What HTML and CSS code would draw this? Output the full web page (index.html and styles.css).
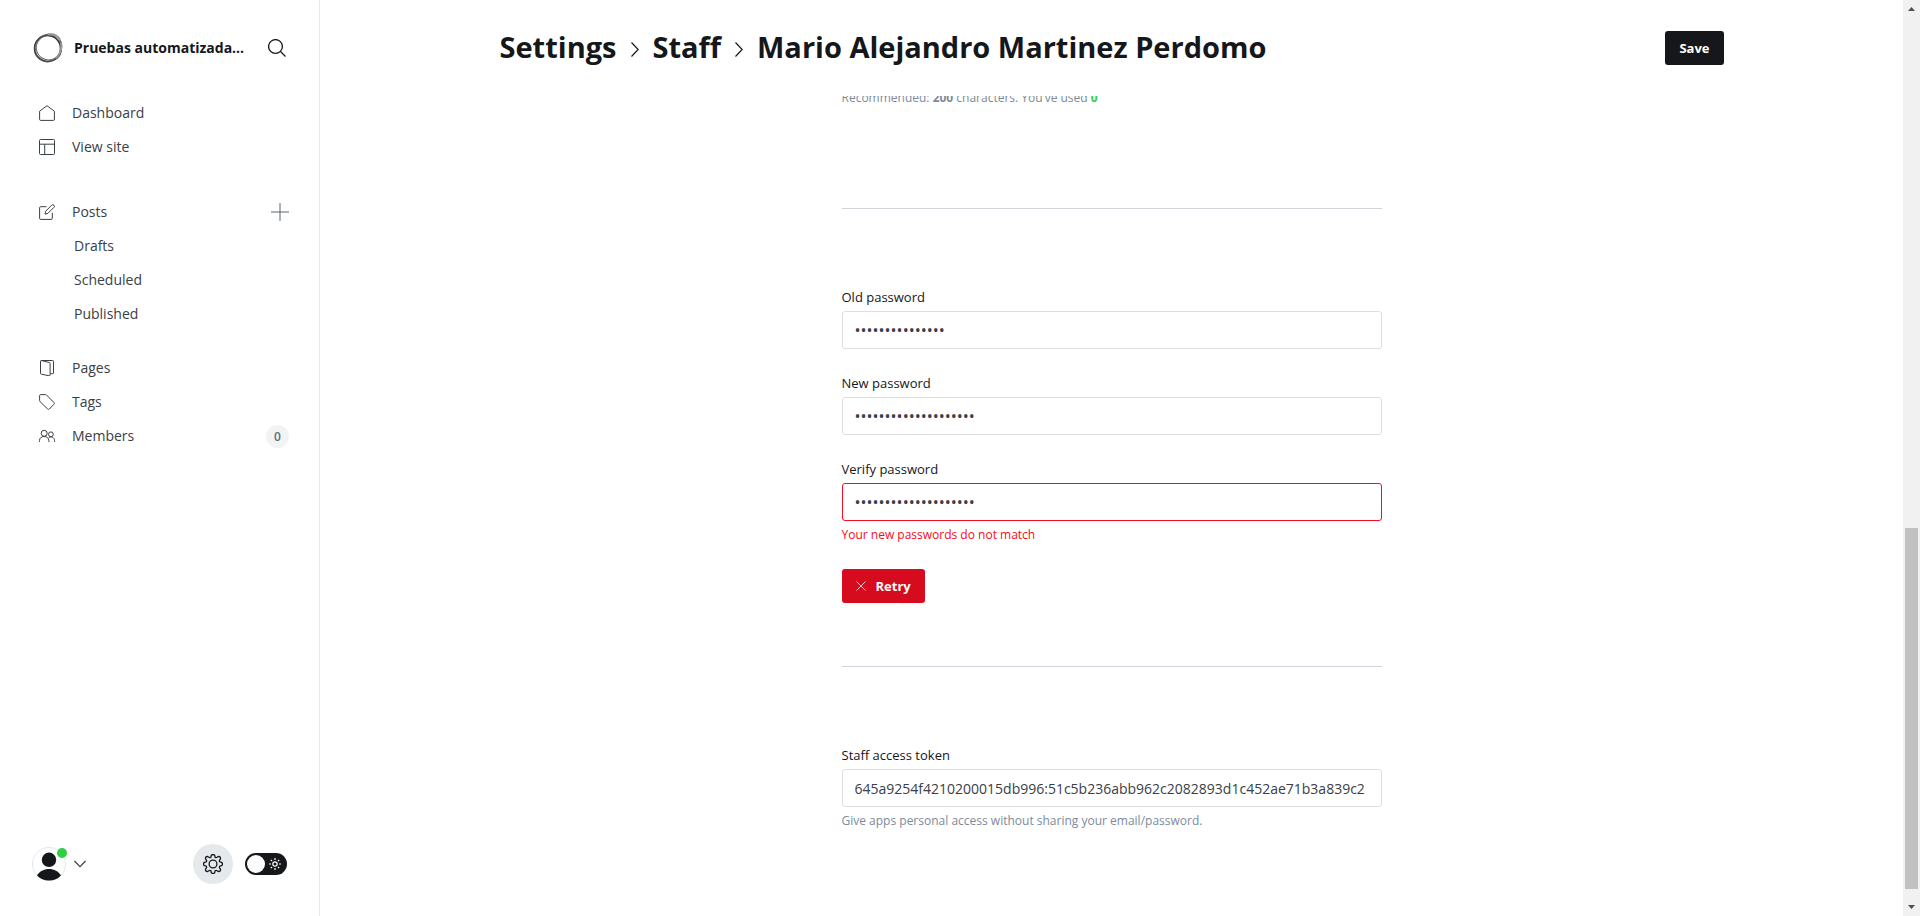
FILE: index.html
```html
<!DOCTYPE html>
<html lang="en">
<head>
<meta charset="utf-8">
<title>Settings - Staff - Mario Alejandro Martinez Perdomo</title>
<link rel="stylesheet" href="styles.css">
</head>
<body>
<div class="app">
  <aside class="sidebar">
    <header class="site">
      <svg class="site-logo" viewBox="0 0 30 30" fill="none">
        <ellipse cx="14.500" cy="15.500" rx="13" ry="13.200" stroke="#333" stroke-width="1.500"/>
        <ellipse cx="16" cy="14" rx="12.600" ry="13" transform="rotate(30 16 14)" stroke="#666" stroke-width="1"/>
        <ellipse cx="15.500" cy="15" rx="14" ry="12.400" transform="rotate(-50 15.500 15)" stroke="#777" stroke-width="1.200"/>
        <ellipse cx="15" cy="15.500" rx="13.600" ry="12.600" transform="rotate(15 15 15.500)" stroke="#444" stroke-width="1"/>
        <path d="M15 1.500c5-1 9 0 12 5M28 10c1 5-1 11-5 15" stroke="#999" stroke-width="2"/>
      </svg>
      <span class="site-name">Pruebas automatizada...</span>
      <button class="icon-button" type="button" aria-label="Search">
        <svg class="icon-18" viewBox="0 0 18 18" fill="none" stroke="#15171a" stroke-width="1.300"><circle cx="7.500" cy="7.500" r="6.900"/><path d="M12.500 12.500l5 5"/></svg>
      </button>
    </header>
    <nav class="nav">
      <ul class="nav-group">
        <li class="nav-row"><a href="#"><svg class="icon-16" viewBox="0 0 16 16"><path d="M.6 6.200L8 .7l7.400 5.500v8.100a1.100 1.100 0 0 1-1.100 1.100H1.700a1.100 1.100 0 0 1-1.100-1.100z"/></svg>Dashboard</a></li>
        <li class="nav-row"><a href="#"><svg class="icon-16" viewBox="0 0 16 16"><rect x=".5" y=".5" width="15" height="15" rx="1"/><path d="M.5 5.200h15M5.700 5.200v10.300"/></svg>View site</a></li>
      </ul>
      <ul class="nav-group posts">
        <li class="nav-row"><a href="#"><svg class="icon-16" viewBox="0 0 16 16"><path d="M7.500 2.700H1.700A1.100 1.100 0 0 0 .6 3.800v10.500a1.100 1.100 0 0 0 1.100 1.100h10.500a1.100 1.100 0 0 0 1.100-1.100V8.700M6 10.100l.7-2.900 6-6a1.500 1.500 0 0 1 2.200 2.200l-6 6z"/></svg>Posts</a>
          <button class="icon-button" type="button" aria-label="New post"><svg class="icon-18" viewBox="0 0 18 18" fill="none" stroke="#596570"><path d="M9 0v18M0 9h18"/></svg></button></li>
        <li class="nav-row sub"><a href="#">Drafts</a></li>
        <li class="nav-row sub"><a href="#">Scheduled</a></li>
        <li class="nav-row sub"><a href="#">Published</a></li>
      </ul>
      <ul class="nav-group">
        <li class="nav-row"><a href="#"><svg class="icon-16" viewBox="0 0 16 16"><path d="M1.500 1.100v12.200a.8.8 0 0 0 .6.8l8 1.700c.6.1 1-.2 1-.8V3.400c0-.5-.3-.8-.7-.9L2.500.6c-.6-.1-1 .1-1 .5zM2.200.500h11.500a.8.8 0 0 1 .8.8v11.600a.8.8 0 0 1-.8.8h-2.500"/></svg>Pages</a></li>
        <li class="nav-row"><a href="#"><svg class="icon-16" viewBox="0 0 16 16"><path d="M.6 1.700A1.100 1.100 0 0 1 1.700.600h4.800c.4 0 .8.200 1.100.500l7.300 7.400c.6.600.6 1.200 0 1.800l-4.500 4.700c-.5.500-1.200.5-1.700 0L1.200 7.800c-.4-.4-.6-.8-.6-1.300z"/></svg>Tags</a></li>
        <li class="nav-row"><a href="#"><svg class="icon-16" viewBox="0 0 16 16"><circle cx="5.200" cy="5.300" r="3"/><path d="M.4 14V12.600a4.800 4.800 0 0 1 9.500 0V14M9.700 9.700c2.800-1.800 5.900 0 5.900 2.900V14"/><circle cx="11.900" cy="6.300" r="2.400"/></svg>Members</a><span class="count">0</span></li>
      </ul>
    </nav>
    <footer class="account">
      <button class="profile" type="button" aria-label="Account menu">
        <span class="avatar">
          <svg class="avatar-image" viewBox="0 0 34 34"><circle cx="17" cy="17" r="16.500" fill="#fff" stroke="#e3e6e9"/><circle cx="17" cy="12.800" r="7.200" fill="#15171a"/><path d="M5 28.400c2.500-4 7-6.400 12-6.400s9.500 2.400 12 6.400A16.500 16.500 0 0 1 17 33.400a16.500 16.500 0 0 1-12-5z" fill="#15171a"/></svg>
          <span class="status"></span>
        </span>
        <svg class="chevron" viewBox="0 0 12 8" fill="none" stroke="#394047" stroke-width="1.200"><path d="M.5 1L6 6.700 11.500 1"/></svg>
      </button>
      <a class="gear" href="#" aria-label="Settings">
        <svg class="icon-20" viewBox="0 0 20 20" fill="none" stroke="#15171a" stroke-width="1.300" stroke-linejoin="round"><circle cx="10" cy="10" r="3.900"/><path d="M8.300 1.300Q10 -.2 11.700 1.300L12.100 3.200Q12.800 3.900 13.600 3.500L15.300 2.500Q17.700 2.300 17.500 4.700L16.500 6.400Q16.100 7.200 16.800 7.900L18.700 8.300Q20.200 10 18.700 11.700L16.800 12.100Q16.100 12.800 16.500 13.600L17.500 15.300Q17.700 17.700 15.300 17.500L13.600 16.500Q12.800 16.100 12.100 16.800L11.700 18.700Q10 20.200 8.300 18.700L7.900 16.800Q7.200 16.100 6.400 16.500L4.700 17.500Q2.300 17.700 2.500 15.300L3.500 13.600Q3.900 12.800 3.200 12.100L1.300 11.700Q-.2 10 1.300 8.300L3.200 7.900Q3.900 7.200 3.500 6.400L2.500 4.700Q2.300 2.300 4.700 2.500L6.400 3.500Q7.200 3.900 7.900 3.200Z"/></svg>
      </a>
      <button class="theme-switch" type="button" role="switch" aria-checked="false" aria-label="Dark mode">
        <span class="knob"></span>
        <svg class="sun" viewBox="0 0 12 12" fill="none" stroke="#fff" stroke-width="1.200"><circle cx="6" cy="6" r="2.200"/><path d="M6 0v2M6 10v2M0 6h2M10 6h2M1.800 1.800l1.200 1.200M9 9l1.200 1.200M10.200 1.800L9 3M3 9l-1.200 1.200"/></svg>
      </button>
    </footer>
  </aside>
  <main class="main">
    <header class="topbar">
      <h1 class="title">
        <a href="#">Settings</a>
        <svg class="crumb" viewBox="0 0 8 15" fill="none" stroke="#15171a" stroke-width="1.200"><path d="M.5 .5L7.200 7.500 .5 14.500"/></svg>
        <a href="#">Staff</a>
        <svg class="crumb" viewBox="0 0 8 15" fill="none" stroke="#15171a" stroke-width="1.200"><path d="M.5 .5L7.200 7.500 .5 14.500"/></svg>
        <span>Mario Alejandro Martinez Perdomo</span>
      </h1>
      <button class="button save" type="button">Save</button>
    </header>
    <div class="scroll">
      <form class="form">
        <p class="hint bio">Recommended: <b>200</b> characters. You’ve used <b class="used">0</b></p>
        <hr class="divider">
        <section class="fields">
          <div class="field"><label for="old">Old password</label><input id="old" type="password" value="123456789012345"></div>
          <div class="field"><label for="new">New password</label><input id="new" type="password" value="12345678901234567890"></div>
          <div class="field invalid"><label for="verify">Verify password</label><input id="verify" type="password" value="12345678901234567891"><p class="hint">Your new passwords do not match</p></div>
          <button class="button retry" type="button"><svg class="cross" viewBox="0 0 10 10" fill="none" stroke="#fff" stroke-width=".8"><path d="M.5 .5l9 9M9.500 .5l-9 9"/></svg>Retry</button>
        </section>
        <hr class="divider">
        <section class="fields">
          <div class="field"><label for="token">Staff access token</label><input id="token" type="text" readonly value="645a9254f4210200015db996:51c5b236abb962c2082893d1c452ae71b3a839c2"><p class="hint">Give apps personal access without sharing your email/password.</p></div>
        </section>
      </form>
    </div>
  </main>
  <div class="scrollbar" aria-hidden="true">
    <svg class="arrow" viewBox="0 0 7 4" fill="#505050"><path d="M3.500 0L7 4H0z"/></svg>
    <div class="track"><div class="thumb"></div></div>
    <svg class="arrow" viewBox="0 0 7 4" fill="#505050"><path d="M0 0h7L3.500 4z"/></svg>
  </div>
</div>
</body>
</html>
```
FILE: styles.css
```css
* { box-sizing: border-box; }
body {
  margin: 0;
  background: #fff;
  color: #394047;
  font: 14px/20px "Open Sans", "Noto Sans", sans-serif;
}
a { color: inherit; text-decoration: none; }
button, input { font: inherit; }
button { border: 0; padding: 0; background: none; cursor: pointer; }
svg { display: block; flex: none; }
ul, p, h1 { margin: 0; padding: 0; list-style: none; }

.app { display: grid; grid-template-columns: 320px 1fr 17px; height: 100vh; }

.sidebar { display: flex; flex-direction: column; border-right: 1px solid #e6e9eb; }
.site { display: flex; align-items: center; height: 96px; padding: 0 33px; }
.site-logo { width: 30px; height: 30px; }
.site-name { flex: 1; margin-left: 11px; color: #15171a; font-weight: 700; white-space: nowrap; }
.icon-18 { width: 18px; height: 18px; }
.icon-20 { width: 20px; height: 20px; }
.icon-16 { width: 16px; height: 16px; fill: none; stroke: #394047; stroke-width: 1; stroke-linejoin: round; }

.nav { flex: 1; }
.nav-group.posts { margin: 31px 0 20px; }
.nav-row { display: flex; align-items: center; height: 34px; padding: 0 30px 0 39px; }
.nav-row a { display: flex; flex: 1; align-items: center; gap: 17px; }
.nav-row.sub { padding-left: 74px; }
.count {
  min-width: 23px;
  border-radius: 12px;
  background: #f1f3f4;
  color: #626d79;
  font-size: 12px;
  font-weight: 600;
  line-height: 23px;
  text-align: center;
}

.account { display: flex; align-items: center; height: 104px; padding: 0 32px; }
.profile { display: flex; align-items: center; gap: 8px; margin-right: auto; }
.avatar { position: relative; }
.avatar-image { width: 34px; height: 34px; }
.status { position: absolute; top: 1px; right: -1px; width: 10px; height: 10px; border-radius: 50%; background: #30cf43; }
.chevron { width: 12px; height: 8px; }
.gear { display: grid; place-items: center; width: 40px; height: 40px; margin-right: 12px; border-radius: 50%; background: #e5e9ec; }
.theme-switch { display: flex; align-items: center; justify-content: space-between; width: 42px; height: 22px; padding: 0 6px 0 2px; border-radius: 11px; background: #15171a; }
.knob { width: 18px; height: 18px; border-radius: 50%; background: #fff; }
.sun { width: 12px; height: 12px; }

.main { display: flex; flex-direction: column; min-width: 0; }
.topbar { display: flex; align-items: center; justify-content: space-between; width: 100%; max-width: 1224px; height: 96px; margin: 0 auto; }
.title { display: flex; align-items: center; gap: 14px; padding-bottom: 2px; color: #15171a; font-size: 29px; font-weight: 700; line-height: 40px; white-space: nowrap; }
.crumb { width: 8px; height: 15px; margin-top: 5px; }
.button { display: inline-flex; align-items: center; height: 34px; border-radius: 3px; color: #fff; font-size: 13px; font-weight: 700; }
.save { padding: 0 14px; background: #15171a; }
.retry { align-self: flex-start; gap: 10px; padding: 0 14px; background: #d60b1d; }
.cross { width: 10px; height: 10px; }

.scroll { flex: 1; overflow: hidden; }
.form { max-width: 540px; margin: -8px auto 0; }
.bio { margin-bottom: 100px; }
.divider { height: 1px; margin: 0; border: 0; background: #ced4d9; }
.fields { display: flex; flex-direction: column; gap: 24px; padding: 78px 0 63px; }
.field { display: flex; flex-direction: column; }
.field label { margin-bottom: 4px; color: #15171a; font-size: 13px; font-weight: 500; }
.field input { height: 38px; padding: 0 12px; border: 1px solid #dddedf; border-radius: 3px; background: #fff; color: #394047; outline: 0; }
.field input[type="password"] { font-size: 16px; }
.hint { color: #7c8b9a; font-size: 12px; }
.field .hint { margin-top: 4px; }
.used { color: #30cf43; }
.invalid input { border-color: #f50b23; }
.invalid .hint { color: #f50b23; }

.scrollbar { display: flex; flex-direction: column; align-items: center; padding: 7px 0; background: #f1f1f1; }
.arrow { width: 7px; height: 4px; }
.track { display: flex; flex: 1; flex-direction: column; justify-content: flex-end; padding: 6px 0 16px; }
.thumb { width: 13px; height: 41.4%; background: #c1c1c1; }
```
